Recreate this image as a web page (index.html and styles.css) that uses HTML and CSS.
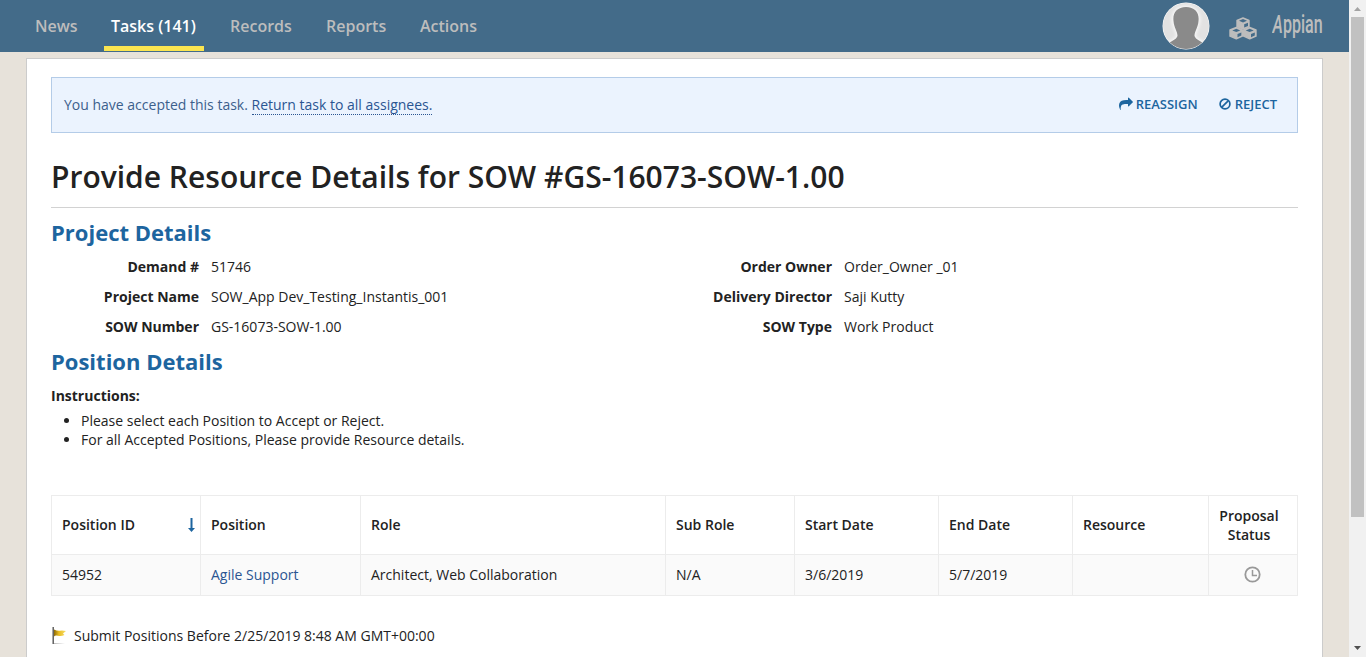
FILE: index.html
```html
<!DOCTYPE html>
<html lang="en">
<head>
<meta charset="utf-8">
<title>Provide Resource Details</title>
<link rel="stylesheet" href="styles.css">
</head>
<body>
<div class="app">
  <div class="page">
    <header class="topbar">
      <nav class="tabs">
        <a class="tab news">News</a>
        <a class="tab tasks active">Tasks (141)</a>
        <a class="tab records">Records</a>
        <a class="tab reports">Reports</a>
        <a class="tab actions">Actions</a>
      </nav>
      <div class="tools">
        <svg class="avatar" width="48" height="48" viewBox="0 0 48 48">
          <defs>
            <clipPath id="face"><circle cx="24" cy="24" r="23"/></clipPath>
            <filter id="glow" x="-20%" y="-20%" width="140%" height="140%"><feGaussianBlur stdDeviation="1.5"/></filter>
          </defs>
          <circle cx="24" cy="24" r="23.5" fill="#fff"/>
          <g clip-path="url(#face)">
            <rect width="48" height="48" fill="#e2e2e2"/>
            <path filter="url(#glow)" fill="#f6f6f6" stroke="#f6f6f6" stroke-width="3" d="M24 5C15 5 10.500 11 11 19C11.500 26 15.500 29 15.500 34C14 39 8 39 5 42V48H43V42C40 39 34 39 32.500 34C32.500 29 36.500 26 37 19C37.500 11 33 5 24 5Z"/>
            <path fill="#8a8a8a" d="M24 5C15 5 10.500 11 11.500 19C12 26 15.500 29 15.500 34C14 38 10 38.500 7 41V48H41V41C38 38.500 34 38 32.500 34C32.500 29 36 26 36.500 19C37.500 11 33 5 24 5Z"/>
          </g>
        </svg>
        <svg class="cubes" width="28" height="23" viewBox="0 0 28 23">
          <g fill="#bdbdbd" stroke="#bdbdbd" stroke-linejoin="round" stroke-width="1.400">
            <path d="M14 1L20 3.500V9.500L14 12L8 9.500V3.500Z"/>
            <path d="M7.300 10.500L13.300 13V19.200L7.300 21.800L1 19.200V13Z"/>
            <path d="M20.700 10.500L27 13V19.200L20.700 21.800L14.700 19.200V13Z"/>
          </g>
          <g fill="#436b89">
            <path d="M14 2.100L18 3.800L14 5.500L10 3.800Z"/>
            <path d="M15.200 7.300L19 5.700V8.900L15.200 10.500Z"/>
            <path d="M7.300 11.700L11.300 13.400L7.300 15.100L3.300 13.400Z"/>
            <path d="M8.500 17L12.300 15.400V18.600L8.500 20.200Z"/>
            <path d="M20.700 11.700L24.700 13.400L20.700 15.100L16.700 13.400Z"/>
            <path d="M22 17L25.800 15.400V18.600L22 20.200Z"/>
          </g>
        </svg>
        <svg class="brand" width="54" height="40" viewBox="0 0 54 40">
          <text x="1" y="27" textLength="82" lengthAdjust="spacingAndGlyphs" transform="scale(.61 1)"><tspan class="slant">A</tspan>ppian</text>
        </svg>
      </div>
    </header>

    <main class="sheet">
      <section class="notice">
        <p class="message">You have accepted this task. <a class="return">Return task to all assignees.</a></p>
        <div class="choices">
          <a class="choice reassign">
            <svg width="14" height="14" viewBox="0 0 1792 1792"><path fill="currentColor" d="M1792 640q0 26-19 45l-512 512q-19 19-45 19t-45-19-19-45v-256h-224q-98 0-175.500 6t-154 21.500-133 42.500-105.500 69.500-80 101-48.500 138.500-17.500 181q0 55 5 123 0 6 2.500 23.500t2.500 26.500q0 15-8.500 25t-23.500 10q-16 0-28-17-7-9-13-22t-13.500-30-10.500-24q-127-285-127-451 0-199 53-333 162-403 875-403h224v-256q0-26 19-45t45-19 45 19l512 512q19 19 19 45z"/></svg>
            <span>REASSIGN</span>
          </a>
          <a class="choice reject">
            <svg width="12" height="12" viewBox="0 0 12 12" fill="none" stroke="currentColor" stroke-width="1.700"><circle cx="6" cy="6" r="4.900"/><path d="M2.600 9.400L9.400 2.600"/></svg>
            <span>REJECT</span>
          </a>
        </div>
      </section>

      <h1>Provide Resource Details for SOW #GS-16073-SOW-1.00</h1>

      <h2 class="project">Project Details</h2>
      <div class="details">
        <dl>
          <dt>Demand #</dt><dd>51746</dd>
          <dt>Project Name</dt><dd>SOW_App Dev_Testing_Instantis_001</dd>
          <dt>SOW Number</dt><dd>GS-16073-SOW-1.00</dd>
        </dl>
        <dl>
          <dt>Order Owner</dt><dd>Order_Owner _01</dd>
          <dt>Delivery Director</dt><dd>Saji Kutty</dd>
          <dt>SOW Type</dt><dd>Work Product</dd>
        </dl>
      </div>

      <h2 class="position">Position Details</h2>
      <p class="label">Instructions:</p>
      <ul class="steps">
        <li>Please select each Position to Accept or Reject.</li>
        <li>For all Accepted Positions, Please provide Resource details.</li>
      </ul>

      <table class="grid">
        <colgroup><col class="c1"><col class="c2"><col class="c3"><col class="c4"><col class="c5"><col class="c6"><col class="c7"><col class="c8"></colgroup>
        <thead>
          <tr>
            <th><div class="sorted"><span>Position ID</span><svg width="7" height="14" viewBox="0 0 7 14"><path fill="#1d659f" d="M2.500 0H4.500V10H7L3.500 14L0 10H2.500Z"/></svg></div></th>
            <th>Position</th><th>Role</th><th>Sub Role</th><th>Start Date</th><th>End Date</th><th>Resource</th><th class="status">Proposal Status</th>
          </tr>
        </thead>
        <tbody>
          <tr>
            <td>54952</td><td><a class="link">Agile Support</a></td><td>Architect, Web Collaboration</td><td>N/A</td><td>3/6/2019</td><td>5/7/2019</td><td></td>
            <td class="status"><svg class="clock" width="17" height="17" viewBox="0 0 17 17" fill="none" stroke="#999"><circle cx="8.500" cy="8.500" r="7.200" stroke-width="1.800"/><path d="M8.500 4V9.500H13" stroke-width="1.500"/></svg></td>
          </tr>
        </tbody>
      </table>

      <div class="deadline">
        <svg width="15" height="18" viewBox="0 0 15 18">
          <defs>
            <linearGradient id="cloth"><stop offset="0" stop-color="#8f6a06"/><stop offset=".4" stop-color="#e9bd20"/><stop offset="1" stop-color="#f7dc6a"/></linearGradient>
            <linearGradient id="shade"><stop offset="0" stop-color="#bbb"/><stop offset="1" stop-color="#fff"/></linearGradient>
          </defs>
          <path d="M2 16H13V17H2Z" fill="url(#shade)"/>
          <path d="M2 2.500Q5 4 8 3.700T14 4L11 6.500L12.500 8Q9 9.500 6 8.700T2 9.500Z" fill="url(#cloth)"/>
          <path d="M.5 0H1.900V17H.5Z" fill="#555"/>
        </svg>
        <span>Submit Positions Before 2/25/2019 8:48 AM GMT+00:00</span>
      </div>
    </main>
  </div>
  <div class="scrollbar">
    <svg width="17" height="17" viewBox="0 0 17 17"><path fill="#a3a3a3" d="M5 11L8.500 7L12 11Z"/></svg>
    <div class="thumb"></div>
    <svg class="down" width="17" height="17" viewBox="0 0 17 17"><path fill="#505050" d="M5 6L8.500 10L12 6Z"/></svg>
  </div>
</div>
</body>
</html>
```
FILE: styles.css
```css
* { box-sizing: border-box; }
html, body { margin: 0; height: 100%; overflow: hidden; }
body { font: 14px/19px "Open Sans", "Noto Sans", sans-serif; color: #222; }
p, h1, h2, dl, dd, ul { margin: 0; padding: 0; }
svg { display: block; flex: none; }
.app { display: flex; height: 657px; }
.page { width: 1349px; height: 657px; overflow: hidden; background: #e7e2da; display: flex; flex-direction: column; }

.topbar { flex: none; height: 52px; background: #436b89; display: flex; justify-content: space-between; }
.tabs { display: flex; padding-left: 28px; }
.tab { height: 51px; padding: 0 7px; margin-right: 19px; font-size: 16px; line-height: 52px; font-weight: 600; color: #bdbdbd; white-space: nowrap; }
.news { width: 57px; }
.tasks { width: 100px; }
.records { width: 77px; }
.reports { width: 75px; }
.tab.active { color: #fff; border-bottom: 5px solid #fbe550; }
.tools { display: flex; padding-right: 23px; }
.avatar { margin: 2px 19px 0 0; }
.cubes { margin: 17px 15px 0 0; }
.brand { margin-top: 6px; }
.brand text { font: 500 25px Roboto, sans-serif; fill: #bdbdbd; }
.brand .slant { font-style: italic; }

.sheet { flex: none; width: 1297px; height: 620px; margin: 6px 0 0 26px; padding: 18px 24px 0; background: #fff; border: 1px solid #ccc; }
.notice { height: 56px; padding: 0 20px 0 12px; border: 1px solid #b4cce8; background: #ebf3fe; color: #3c5f8c; display: flex; align-items: center; justify-content: space-between; }
.return { display: inline-block; line-height: 18px; color: #2a5592; border-bottom: 1px dotted #2a5592; }
.choices { display: flex; gap: 21px; padding-bottom: 2px; color: #1d659f; font-size: 13px; font-weight: 600; }
.choice { display: flex; align-items: center; gap: 4px; white-space: nowrap; }
.reassign { gap: 3px; }

h1 { height: 75px; padding-top: 24px; font-size: 30px; line-height: 40px; font-weight: 600; border-bottom: 1px solid #d2d2d2; white-space: nowrap; }
h2 { font-size: 22px; line-height: 30px; font-weight: 700; color: #1d659f; white-space: nowrap; }
.project { margin-top: 9px; }
.details { display: grid; grid-template-columns: 633px 1fr; margin-top: 5px; }
dl { display: grid; grid-template-columns: 148px 1fr; column-gap: 12px; grid-auto-rows: 30px; line-height: 30px; }
dt { text-align: right; font-weight: 700; white-space: nowrap; }
.position { margin-top: 4px; }
.label { margin-top: 10px; font-weight: 700; }
.steps { margin-top: 6px; padding-left: 30px; }

.grid { width: 1247px; margin-top: 46px; table-layout: fixed; border-spacing: 0; border-right: 1px solid #ececec; border-bottom: 1px solid #ececec; }
.grid th, .grid td { padding: 0 0 2px 10px; text-align: left; border: 0 solid #ececec; border-width: 1px 0 0 1px; }
.grid th { height: 59px; font-weight: 600; }
.grid td { height: 41px; background: #fafafa; }
.c1 { width: 149px; }
.c2 { width: 160px; }
.c3 { width: 305px; }
.c4 { width: 129px; }
.c5 { width: 144px; }
.c6 { width: 134px; }
.c7 { width: 136px; }
.c8 { width: 89px; }
.grid .status { padding: 0 9px 1px 8px; text-align: center; }
.grid th.status { padding: 0 16px 0 8px; }
.sorted { display: flex; align-items: center; justify-content: space-between; padding-right: 6px; }
.sorted svg { margin: 2px -1px 0 0; }
.link { color: #2a5592; }
.clock { margin: 0 auto; }
.deadline { display: flex; align-items: center; gap: 7px; margin: 30px 0 0 1px; }

.scrollbar { width: 17px; height: 657px; background: #f1f1f1; display: flex; flex-direction: column; }
.thumb { flex: none; width: 13px; height: 500px; margin-left: 2px; background: #c1c1c1; }
.down { margin-top: auto; }
```
